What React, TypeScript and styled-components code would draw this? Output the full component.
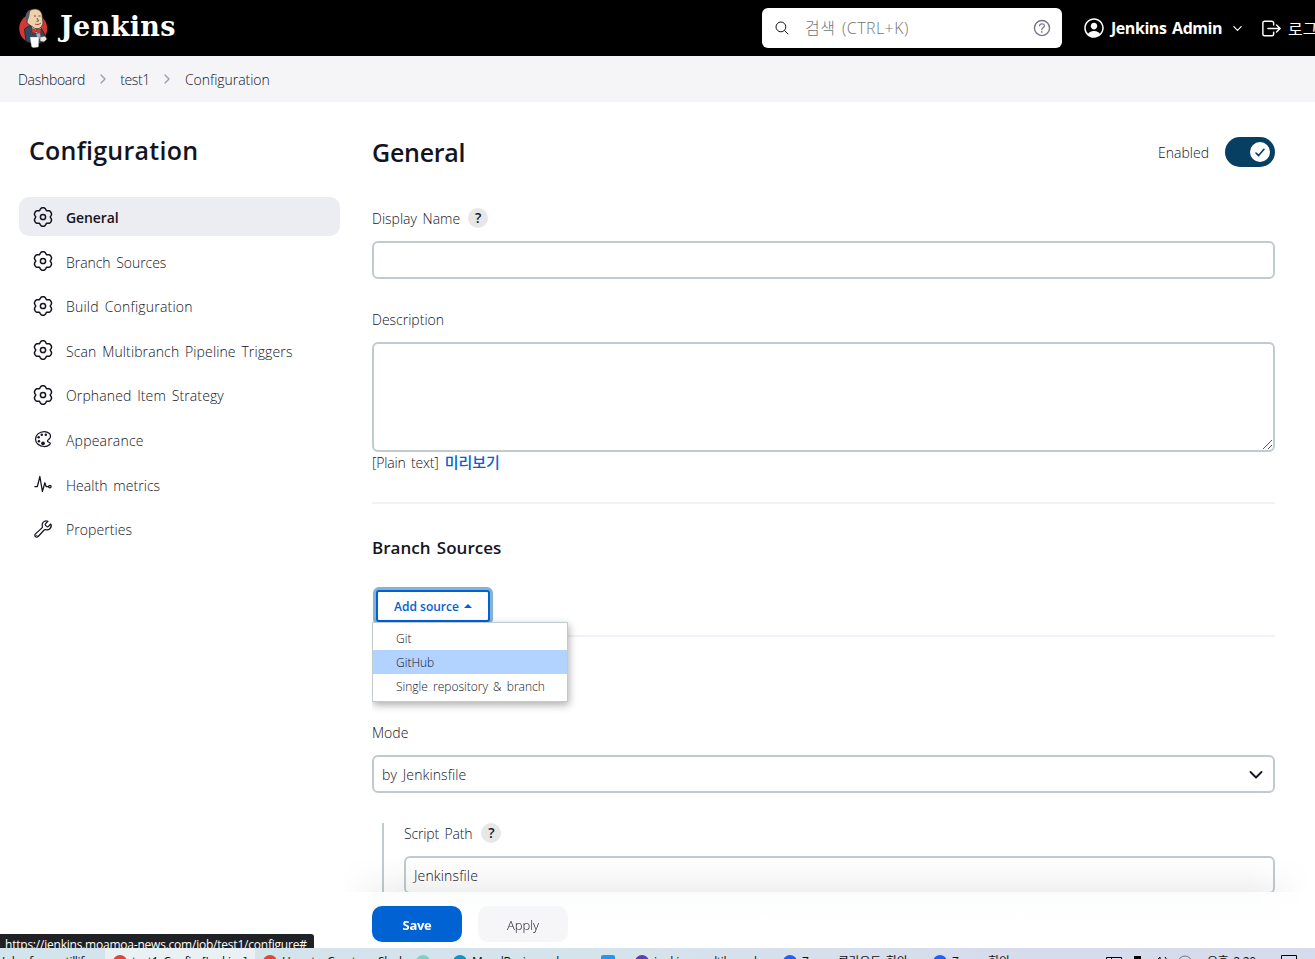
import React from 'react';
import styled, { createGlobalStyle, css } from 'styled-components';
import {
  IoColorPaletteOutline,
  IoPulseOutline,
  IoBuildOutline,
  IoSearchOutline,
  IoHelpCircleOutline,
  IoPersonCircleOutline,
  IoLogOutOutline,
  IoChevronDown,
  IoChevronForward,
} from 'react-icons/io5';

const GlobalStyle = createGlobalStyle`
  * { box-sizing: border-box; }
  html, body { margin: 0; padding: 0; background: #fff; overflow: hidden; }
  body {
    font-family: "Open Sans", "Noto Sans CJK KR", sans-serif;
    font-size: 14px;
    font-weight: 300;
    word-spacing: 2px;
    color: #14141f;
  }
  svg { display: block; flex: none; }
`;

const Screen = styled.div`
  width: 1315px;
  height: 959px;
  display: flex;
  flex-direction: column;
  overflow: hidden;
`;

const Browser = styled.div`
  position: relative;
  height: 948px;
  flex: none;
  display: flex;
  flex-direction: column;
  overflow: hidden;
`;

/* Letter spacing varies with each label */
const Label = styled.span<{ $ls?: number; $size?: number; $weight?: number; $color?: string }>`
  display: inline-block;
  white-space: nowrap;
  line-height: 20px;
  letter-spacing: ${(p) => p.$ls ?? 0}px;
  ${(p) => p.$size && css`font-size: ${p.$size}px;`}
  ${(p) => p.$weight && css`font-weight: ${p.$weight};`}
  ${(p) => p.$color && css`color: ${p.$color};`}
`;

const Header = styled.header`
  height: 56px;
  flex: none;
  background: #000;
  color: #fff;
  display: flex;
  align-items: center;
  overflow: hidden;
`;

const Brand = styled.div`
  display: flex;
  align-items: center;
  width: 762px;
  flex: none;
  padding-left: 19px;
  gap: 11px;
`;

const BrandName = styled.span`
  font-family: "DejaVu Serif", serif;
  font-weight: 700;
  font-size: 27px;
  line-height: 32px;
  letter-spacing: 0.35px;
  margin-top: -3px;
`;

const SearchBox = styled.div`
  width: 300px;
  height: 40px;
  flex: none;
  background: #fff;
  border-radius: 6px;
  display: flex;
  align-items: center;
  padding: 0 9px 0 12px;
  color: #14141f;
`;

const Placeholder = styled.span`
  flex: 1;
  margin: -2px 0 0 15px;
  font-size: 16px;
  letter-spacing: 0.45px;
  color: #757575;
  white-space: nowrap;
`;

const UserLink = styled.div`
  display: flex;
  align-items: center;
  margin-left: 20px;
  width: 178px;
  flex: none;
`;

const UserName = styled.span`
  font-size: 16px;
  font-weight: 700;
  letter-spacing: -0.45px;
  margin: 0 7px 0 5px;
  width: 113px;
  white-space: nowrap;
`;

const Logout = styled.div`
  display: flex;
  align-items: center;
  gap: 5px;
  font-size: 16px;
  font-weight: 400;
  white-space: nowrap;
`;

const Breadcrumbs = styled.nav`
  height: 46px;
  flex: none;
  background: #f5f5f8;
  display: flex;
  align-items: center;
  padding: 2px 0 0 18px;
`;

const Separator = styled.span`
  width: 35px;
  display: flex;
  justify-content: center;
  color: #9a9ab0;
  margin-top: -2px;
`;

const Body = styled.div`
  flex: 1;
  min-height: 0;
  display: flex;
`;

const Sidebar = styled.aside`
  width: 372px;
  flex: none;
  padding: 31px 32px 0 19px;
`;

const SideTitle = styled.h1`
  margin: 0 0 30px;
  padding-left: 10px;
  font-size: 25px;
  font-weight: 600;
  letter-spacing: 0.25px;
  line-height: 34px;
  white-space: nowrap;
`;

const NavItem = styled.a<{ $active?: boolean }>`
  display: flex;
  align-items: center;
  height: 39px;
  margin-bottom: 5.6px;
  padding: 0 14px;
  gap: 13px;
  border-radius: 10px;
  background: ${(p) => (p.$active ? '#ecedf3' : 'transparent')};
  span { margin-top: 3px; }
`;

const Main = styled.main`
  position: relative;
  flex: 1;
  min-width: 0;
  display: flex;
  flex-direction: column;
`;

const FormArea = styled.div`
  height: 790px;
  flex: none;
  overflow: hidden;
  padding: 33px 40px 0 0;
  display: flex;
  flex-direction: column;
`;

const Row = styled.div<{ $h: number; $gap?: number; $drop?: number }>`
  display: flex;
  align-items: center;
  flex: none;
  height: ${(p) => p.$h}px;
  gap: ${(p) => p.$gap ?? 0}px;
  > ${Label} { margin-top: ${(p) => p.$drop ?? 0}px; }
`;

const Preview = styled.a`
  margin-top: -2px;
  color: #0062d3;
  font-size: 15px;
  font-weight: 500;
  line-height: 20px;
`;

const Heading = styled.h2`
  margin: 0;
  font-size: 25px;
  font-weight: 600;
  letter-spacing: -0.25px;
  line-height: 34px;
  flex: 1;
`;

const Toggle = styled.span`
  width: 50px;
  height: 30px;
  margin-left: 16px;
  padding-right: 5px;
  border-radius: 15px;
  background: #063f61;
  display: flex;
  align-items: center;
  justify-content: flex-end;
`;

const Knob = styled.span`
  width: 20px;
  height: 20px;
  border-radius: 50%;
  background: #fff;
  display: flex;
  align-items: center;
  justify-content: center;
`;

const HelpBadge = styled.span`
  width: 20px;
  height: 20px;
  border-radius: 50%;
  background: #e7e7e7;
  font-size: 14px;
  font-weight: 600;
  line-height: 20px;
  text-align: center;
`;

const Field = styled.div<{ $h: number }>`
  position: relative;
  height: ${(p) => p.$h}px;
  flex: none;
  border: 2px solid #c0cbcf;
  border-radius: 6px;
  background: #fff;
  display: flex;
  align-items: center;
  justify-content: space-between;
  padding: 2px 10px 0 8px;
`;

const Grip = styled.svg`
  position: absolute;
  right: 0;
  bottom: 0;
`;

const Spacer = styled.div<{ $h: number }>`
  height: ${(p) => p.$h}px;
  flex: none;
`;

const Divider = styled.hr`
  width: 100%;
  height: 2px;
  flex: none;
  margin: 0;
  border: 0;
  background: #f1f1f7;
`;

const SourceAnchor = styled.div`
  position: relative;
  height: 36px;
  flex: none;
  padding: 3px 0 0 4px;
`;

const AddButton = styled.button`
  display: flex;
  align-items: center;
  justify-content: center;
  gap: 5px;
  width: 114px;
  height: 32px;
  padding: 2px 0 0;
  border: 2px solid #0062d3;
  border-radius: 3px;
  box-shadow: 0 0 0 3px #85b3d3;
  background: #fff;
  color: #0062d3;
  font-family: inherit;
`;

const Caret = styled.svg`
  margin-top: -2px;
`;

const Menu = styled.div`
  position: absolute;
  left: 0;
  top: 35px;
  width: 196px;
  height: 80px;
  padding-top: 3px;
  border: 1px solid #c0cbcf;
  background: #fff;
  box-shadow: 1px 3px 8px rgba(0, 0, 0, 0.32);
  z-index: 2;
`;

const MenuItem = styled.div<{ $selected?: boolean }>`
  height: 24px;
  padding: 3px 0 0 23px;
  line-height: 20px;
  font-size: 12px;
  background: ${(p) => (p.$selected ? '#b2d2ff' : '#fff')};
`;

const Nested = styled.div`
  margin-left: 10px;
  padding-left: 20px;
  border-left: 2px solid #c0cbcf;
  height: 100px;
  flex: none;
`;

const BarShade = styled.div`
  position: absolute;
  left: -32px;
  right: 5px;
  bottom: 56px;
  height: 36px;
  background: linear-gradient(to top, rgba(0, 0, 0, 0.06), rgba(0, 0, 0, 0.025) 50%, transparent);
  mask-image: linear-gradient(to right, transparent, #000 60px, #000 calc(100% - 60px), transparent);
`;

const ButtonBar = styled.div`
  height: 56px;
  flex: none;
  display: flex;
  gap: 16px;
  padding-top: 14px;
  background: linear-gradient(#fbfcfc, #fff 28px);
  mask-image: linear-gradient(to right, #000 calc(100% - 70px), transparent);
`;

const BarButton = styled.button<{ $primary?: boolean }>`
  width: 90px;
  height: 36px;
  padding: 2px 0 0;
  border: 0;
  border-radius: 10px;
  font-family: inherit;
  background: ${(p) => (p.$primary ? '#0062d3' : '#f6f6f9')};
  color: ${(p) => (p.$primary ? '#fff' : '#14141f')};
`;

const StatusUrl = styled.div`
  position: absolute;
  left: 0;
  bottom: 0;
  width: 314px;
  height: 14px;
  padding-left: 5px;
  overflow: hidden;
  border-top-right-radius: 3px;
  background: #202124;
  color: #fff;
  font-size: 12px;
  font-weight: 400;
  letter-spacing: -0.22px;
  line-height: 21px;
  white-space: nowrap;
`;

const Taskbar = styled.div`
  height: 11px;
  flex: none;
  display: flex;
  overflow: hidden;
  background: linear-gradient(to right, #d2e4ec, #d6e3eb 50%, #d6dceb 75%, #d6dceb);
  color: #111;
`;

const Task = styled.div<{ $w: number; $active?: boolean; $left?: number }>`
  width: ${(p) => p.$w}px;
  flex: none;
  display: flex;
  align-items: flex-start;
  padding: 7px 0 0 ${(p) => p.$left ?? 8}px;
  gap: 5px;
  overflow: hidden;
  background: ${(p) => (p.$active ? '#e9f1f5' : 'transparent')};
`;

const TaskText = styled.span`
  font-size: 12px;
  font-weight: 400;
  line-height: 14px;
  letter-spacing: -0.3px;
  white-space: nowrap;
`;

const TaskDot = styled.i<{ $c: string; $square?: boolean }>`
  width: 14px;
  height: 14px;
  flex: none;
  border-radius: ${(p) => (p.$square ? '2px' : '50%')};
  background: ${(p) => p.$c};
`;

const TrayIcons = styled.svg`
  margin-left: auto;
`;

const Butler = () => (
  <svg width="30" height="40" viewBox="0 0 30 40">
    <ellipse cx="14.2" cy="20.500" rx="14" ry="14.500" fill="#d33833" />
    <path d="M5.500 21L10 18l12 2 4 7-1 7-8 2-10-2.500z" fill="#2f4a5f" stroke="#18222b" strokeWidth="0.8" />
    <path d="M7.500 8C9-.5 21-1.500 23 6.500l1 8.500c-1 5-5 7-9 5L8 15z" fill="#efd0ad" stroke="#3b2f28" strokeWidth="0.8" />
    <path d="M6.500 9.500C6.500 5 9 2.500 12 1.500 10 5 11 8 9.500 10.500L8 15z" fill="#555a66" />
    <path d="M15 8h2M19.500 8h2M18 10l1.500 3-2 .4" fill="none" stroke="#3b2f28" strokeWidth="0.8" />
    <path d="M16 16c2 1 4 .5 6-1" fill="none" stroke="#8f4b3c" strokeWidth="1" />
    <path d="M13 19l5 3 4-2-1 6-8-2z" fill="#e8edf0" />
    <path d="M12.500 20l4.500 2 5-1-.5 5-4-2-4.500 1z" fill="#d33833" stroke="#5e1715" strokeWidth="0.5" />
    <path d="M17 26l4-.5 1 5-3 1z" fill="#9fb4c0" />
    <path d="M11 29h9l-.5 10-5 .8-2-1z" fill="#fff" stroke="#777" strokeWidth="0.4" />
    <path d="M21 29l5-1 2 3-3 3-4-1z" fill="#efe6dc" stroke="#333" strokeWidth="0.5" />
  </svg>
);

/* Six-lobed cog outline, sampled around its centre */
const cogOutline =
  Array.from({ length: 72 }, (_, i) => {
    const a = (i * Math.PI) / 36;
    const r = 8.5 - 0.95 * Math.cos(6 * a) - 0.25 * Math.cos(12 * a);
    return `${i ? 'L' : 'M'}${(10 + r * Math.cos(a)).toFixed(2)} ${(10 + r * Math.sin(a)).toFixed(2)}`;
  }).join('') + 'Z';

const Cog = ({ size }: { size: number }) => (
  <svg width={size} height={size} viewBox="0 0 20 20" fill="none" stroke="currentColor" strokeWidth="1.5" strokeLinejoin="round">
    <path d={cogOutline} />
    <circle cx="10" cy="10" r="2.6" />
  </svg>
);

const navItems = [
  { text: 'General', icon: Cog, ls: -0.1, active: true },
  { text: 'Branch Sources', icon: Cog, ls: -0.04 },
  { text: 'Build Configuration', icon: Cog, ls: 0.22 },
  { text: 'Scan Multibranch Pipeline Triggers', icon: Cog, ls: 0.12 },
  { text: 'Orphaned Item Strategy', icon: Cog, ls: 0.12 },
  { text: 'Appearance', icon: IoColorPaletteOutline, ls: 0.2 },
  { text: 'Health metrics', icon: IoPulseOutline, ls: 0.05 },
  { text: 'Properties', icon: IoBuildOutline, ls: 0.07 },
];

export default function App() {
  return (
    <Screen>
      <GlobalStyle />
      <Browser>
        <Header>
          <Brand>
            <Butler />
            <BrandName>Jenkins</BrandName>
          </Brand>
          <SearchBox>
            <IoSearchOutline size={16} />
            <Placeholder>검색 (CTRL+K)</Placeholder>
            <IoHelpCircleOutline size={22} color="#73738c" />
          </SearchBox>
          <UserLink>
            <IoPersonCircleOutline size={24} />
            <UserName>Jenkins Admin</UserName>
            <IoChevronDown size={13} />
          </UserLink>
          <Logout>
            <IoLogOutOutline size={23} />
            <span>로그아웃</span>
          </Logout>
        </Header>
        <Breadcrumbs>
          <Label $ls={-0.3}>Dashboard</Label>
          <Separator><IoChevronForward size={14} /></Separator>
          <Label $ls={-0.35}>test1</Label>
          <Separator><IoChevronForward size={14} /></Separator>
          <Label $ls={-0.04}>Configuration</Label>
        </Breadcrumbs>
        <Body>
          <Sidebar>
            <SideTitle>Configuration</SideTitle>
            {navItems.map(({ text, icon: Icon, ls, active }) => (
              <NavItem key={text} $active={active}>
                <Icon size={20} />
                <Label $ls={ls} $weight={active ? 600 : 300}>{text}</Label>
              </NavItem>
            ))}
          </Sidebar>
          <Main>
            <FormArea>
              <Row $h={34} $drop={2}>
                <Heading>General</Heading>
                <Label>Enabled</Label>
                <Toggle>
                  <Knob>
                    <svg width="10" height="9" viewBox="0 0 10 9" fill="none" stroke="#063f61" strokeWidth="1.6" strokeLinecap="round" strokeLinejoin="round">
                      <path d="M1 5l2.600 2.600L9 1.300" />
                    </svg>
                  </Knob>
                </Toggle>
              </Row>
              <Spacer $h={37} />
              <Row $h={24} $gap={8} $drop={2}>
                <Label>Display Name</Label>
                <HelpBadge>?</HelpBadge>
              </Row>
              <Spacer $h={11} />
              <Field $h={38} />
              <Spacer $h={31} />
              <Row $h={22} $drop={-2}>
                <Label>Description</Label>
              </Row>
              <Spacer $h={10} />
              <Field $h={110}>
                <Grip width="11" height="11" viewBox="0 0 11 11" stroke="#555" strokeWidth="1">
                  <path d="M1 10L10 1M6 10l4-4" />
                </Grip>
              </Field>
              <Row $h={22} $gap={6}>
                <Label $ls={-0.18}>[Plain text]</Label>
                <Preview>미리보기</Preview>
              </Row>
              <Spacer $h={28} />
              <Divider />
              <Spacer $h={31} />
              <Row $h={26}>
                <Label $size={17} $weight={600}>Branch Sources</Label>
              </Row>
              <Spacer $h={26} />
              <SourceAnchor>
                <AddButton>
                  <Label $size={12} $weight={600}>Add source</Label>
                  <Caret width="8" height="4" viewBox="0 0 8 4"><path d="M0 4L4 0l4 4z" fill="#0062d3" /></Caret>
                </AddButton>
                <Menu>
                  <MenuItem>Git</MenuItem>
                  <MenuItem $selected>GitHub</MenuItem>
                  <MenuItem>Single repository &amp; branch</MenuItem>
                </Menu>
              </SourceAnchor>
              <Spacer $h={12} />
              <Divider />
              <Spacer $h={86} />
              <Row $h={22} $drop={-2}>
                <Label>Mode</Label>
              </Row>
              <Spacer $h={10} />
              <Field $h={38}>
                <Label $ls={0.12}>by Jenkinsfile</Label>
                <svg width="14" height="9" viewBox="0 0 14 9" fill="none" stroke="#14141f" strokeWidth="1.8" strokeLinecap="round" strokeLinejoin="round">
                  <path d="M1.500 1L7 6.500 12.500 1" />
                </svg>
              </Field>
              <Spacer $h={30} />
              <Nested>
                <Row $h={20} $gap={9} $drop={2}>
                  <Label $ls={-0.15}>Script Path</Label>
                  <HelpBadge>?</HelpBadge>
                </Row>
                <Spacer $h={13} />
                <Field $h={38}>
                  <Label $ls={0.15}>Jenkinsfile</Label>
                </Field>
              </Nested>
            </FormArea>
            <ButtonBar>
              <BarButton $primary><Label $size={13} $weight={700} $ls={-0.3}>Save</Label></BarButton>
              <BarButton><Label $size={13} $weight={300}>Apply</Label></BarButton>
            </ButtonBar>
            <BarShade />
          </Main>
        </Body>
        <StatusUrl>https://jenkins.moamoa-news.com/job/test1/configure#</StatusUrl>
      </Browser>
      <Taskbar>
        <Task $w={105} $left={2}><TaskText>Jobs from stillife</TaskText></Task>
        <Task $w={150} $active><TaskDot $c="#e34234" /><TaskText>test1 Config [Jenkins]</TaskText></Task>
        <Task $w={153}><TaskDot $c="#e34234" /><TaskText>How to Create a Slack</TaskText></Task>
        <Task $w={37}><TaskDot $c="#7fd0c4" /></Task>
        <Task $w={148}><TaskDot $c="#1290c8" /><TaskText>MondReviewweb</TaskText></Task>
        <Task $w={34}><TaskDot $c="#2196f3" $square /></Task>
        <Task $w={148}><TaskDot $c="#5b3fb8" /><TaskText>jenkins multibranch</TaskText></Task>
        <Task $w={150}><TaskDot $c="#1f5eff" /><TaskText>Zoom 클라우드 회의</TaskText></Task>
        <Task $w={150}><TaskDot $c="#1f5eff" /><TaskText>Zoom 회의</TaskText></Task>
        <TrayIcons width="99" height="11" viewBox="0 0 99 11" fill="none" stroke="#000">
          <path d="M6.500 12V9.500H21.500V12M11.500 9V12" />
          <path d="M34 8h7v4h-7z" fill="#000" stroke="none" />
          <path d="M57 12l3-3v3M65 9l2 3" />
          <circle cx="85" cy="15" r="7" stroke="#777" />
        </TrayIcons>
        <Task $w={76}><TaskText>오후 2:20</TaskText></Task>
        <svg width="40" height="11" viewBox="0 0 40 11" fill="none" stroke="#000">
          <path d="M6.500 12V7.500H21.500V12" />
        </svg>
      </Taskbar>
    </Screen>
  );
}
